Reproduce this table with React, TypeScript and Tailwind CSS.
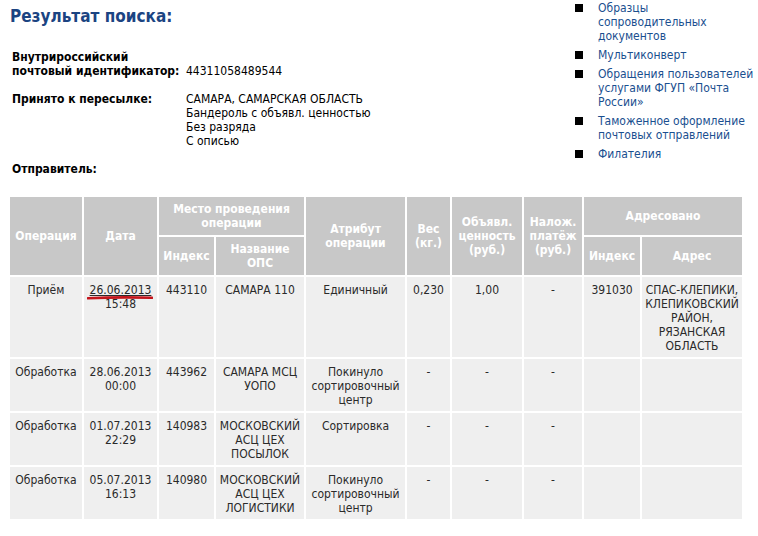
import React from "react";

const font = "font-['DejaVu_Sans_Condensed','DejaVu_Sans',sans-serif]";

type Row = {
  op: string;
  date: string;
  time: string;
  index: string;
  ops: string[];
  attr: string[];
  weight: string;
  value: string;
  cod: string;
  toIndex: string;
  address: string[];
  mark?: boolean;
};

const rows: Row[] = [
  {
    op: "Приём",
    date: "26.06.2013",
    time: "15:48",
    index: "443110",
    ops: ["САМАРА 110"],
    attr: ["Единичный"],
    weight: "0,230",
    value: "1,00",
    cod: "-",
    toIndex: "391030",
    address: ["СПАС-КЛЕПИКИ,", "КЛЕПИКОВСКИЙ", "РАЙОН,", "РЯЗАНСКАЯ", "ОБЛАСТЬ"],
    mark: true,
  },
  {
    op: "Обработка",
    date: "28.06.2013",
    time: "00:00",
    index: "443962",
    ops: ["САМАРА МСЦ", "УОПО"],
    attr: ["Покинуло", "сортировочный", "центр"],
    weight: "-",
    value: "-",
    cod: "-",
    toIndex: "",
    address: [],
  },
  {
    op: "Обработка",
    date: "01.07.2013",
    time: "22:29",
    index: "140983",
    ops: ["МОСКОВСКИЙ", "АСЦ ЦЕХ", "ПОСЫЛОК"],
    attr: ["Сортировка"],
    weight: "-",
    value: "-",
    cod: "-",
    toIndex: "",
    address: [],
  },
  {
    op: "Обработка",
    date: "05.07.2013",
    time: "16:13",
    index: "140980",
    ops: ["МОСКОВСКИЙ", "АСЦ ЦЕХ", "ЛОГИСТИКИ"],
    attr: ["Покинуло", "сортировочный", "центр"],
    weight: "-",
    value: "-",
    cod: "-",
    toIndex: "",
    address: [],
  },
];

const links = [
  ["Образцы", "сопроводительных", "документов"],
  ["Мультиконверт"],
  ["Обращения пользователей", "услугами ФГУП «Почта", "России»"],
  ["Таможенное оформление", "почтовых отправлений"],
  ["Филателия"],
];

const Lines = ({ lines }: { lines: string[] }) => (
  <>
    {lines.map((l, i) => (
      <div key={i} className="whitespace-nowrap">
        {l}
      </div>
    ))}
  </>
);

const th = "bg-[#c8c8c8] text-white font-bold text-center align-middle p-0";
const td = "bg-[#efefef] text-[#2a2a2a] text-center align-top pt-[6px] pb-[4px] px-0";

export default function App() {
  return (
    <div className={`w-[758px] h-[536px] bg-white overflow-hidden text-[12px] leading-[14px] text-black ${font}`}>
      <div className="flex">
        {/* left info */}
        <div className="flex-1 pl-[12px]">
          <h1 className="pt-[6px] -ml-[2px] text-[17px] leading-[20px] font-bold text-[#1b4482]">Результат поиска:</h1>
          <div className="mt-[24px] flex">
            <div className="w-[174px] font-bold">
              <div>Внутрироссийский</div>
              <div className="whitespace-nowrap">почтовый идентификатор:</div>
            </div>
            <div className="pt-[14px]">44311058489544</div>
          </div>
          <div className="mt-[14px] flex">
            <div className="w-[174px] font-bold">Принято к пересылке:</div>
            <div>
              <div>САМАРА, САМАРСКАЯ ОБЛАСТЬ</div>
              <div>Бандероль с объявл. ценностью</div>
              <div>Без разряда</div>
              <div>С описью</div>
            </div>
          </div>
          <div className="mt-[14px] font-bold">Отправитель:</div>
        </div>

        {/* sidebar */}
        <ul className="w-[183px] pt-[1px] flex flex-col gap-[5px]">
          {links.map((item, i) => (
            <li key={i} className="flex">
              <span className="w-[23px] shrink-0 pt-[3px]">
                <span className="block w-[8px] h-[8px] bg-black" />
              </span>
              <a className="text-[#1a4f8f]">
                <Lines lines={item} />
              </a>
            </li>
          ))}
        </ul>
      </div>

      <table className="mt-[19px] ml-[8px] border-separate border-spacing-[2px] table-fixed w-[736px]">
        <colgroup>
          <col className="w-[72px]" />
          <col className="w-[73px]" />
          <col className="w-[55px]" />
          <col className="w-[88px]" />
          <col className="w-[99px]" />
          <col className="w-[43px]" />
          <col className="w-[70px]" />
          <col className="w-[58px]" />
          <col className="w-[56px]" />
          <col className="w-[100px]" />
        </colgroup>
        <thead>
          <tr className="h-[38px]">
            <th rowSpan={2} className={th}>Операция</th>
            <th rowSpan={2} className={th}>Дата</th>
            <th colSpan={2} className={th}>
              <Lines lines={["Место проведения", "операции"]} />
            </th>
            <th rowSpan={2} className={th}>
              <Lines lines={["Атрибут", "операции"]} />
            </th>
            <th rowSpan={2} className={th}>
              <Lines lines={["Вес", "(кг.)"]} />
            </th>
            <th rowSpan={2} className={th}>
              <Lines lines={["Объявл.", "ценность", "(руб.)"]} />
            </th>
            <th rowSpan={2} className={th}>
              <Lines lines={["Налож.", "платёж", "(руб.)"]} />
            </th>
            <th colSpan={2} className={th}>Адресовано</th>
          </tr>
          <tr className="h-[38px]">
            <th className={th}>Индекс</th>
            <th className={th}>
              <Lines lines={["Название", "ОПС"]} />
            </th>
            <th className={th}>Индекс</th>
            <th className={th}>Адрес</th>
          </tr>
        </thead>
        <tbody>
          {rows.map((r, i) => (
            <tr key={i}>
              <td className={td}>{r.op}</td>
              <td className={td}>
                <div className="relative">
                  <div className={r.mark ? "underline" : ""}>{r.date}</div>
                  <div>{r.time}</div>
                  {r.mark && (
                    <svg className="absolute left-[3px] top-[12px]" width="66" height="6" viewBox="0 0 66 6">
                      <path d="M1 3.2 C 20 2.4, 45 2.2, 65 2.8" stroke="#c4151c" strokeWidth="2.6" fill="none" strokeLinecap="round" />
                    </svg>
                  )}
                </div>
              </td>
              <td className={td}>{r.index}</td>
              <td className={td}>
                <Lines lines={r.ops} />
              </td>
              <td className={td}>
                <Lines lines={r.attr} />
              </td>
              <td className={td}>{r.weight}</td>
              <td className={td}>{r.value}</td>
              <td className={td}>{r.cod}</td>
              <td className={td}>{r.toIndex}</td>
              <td className={td}>
                <Lines lines={r.address} />
              </td>
            </tr>
          ))}
        </tbody>
      </table>
    </div>
  );
}
